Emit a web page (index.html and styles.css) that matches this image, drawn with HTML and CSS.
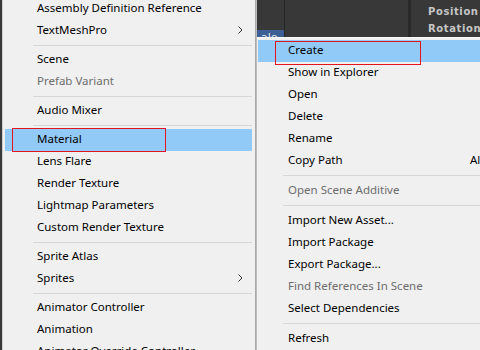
FILE: index.html
```html
<!DOCTYPE html>
<html>
<head>
	<title>Create menu</title>
	<link rel="stylesheet" href="styles.css">
</head>
<body>

<div class="pantalla">
	<div class="menu menu-izq">
		<div class="item">Assembly Definition Reference</div>
		<div class="item sub">TextMeshPro<svg class="flecha" width="5" height="8" viewBox="0 0 5 8"><path d="M0.5 0.5 L4 4 L0.5 7.5" fill="none" stroke="#333" stroke-width="1"/></svg></div>
		<div class="sep"></div>
		<div class="item">Scene</div>
		<div class="item off">Prefab Variant</div>
		<div class="sep"></div>
		<div class="item">Audio Mixer</div>
		<div class="sep"></div>
		<div class="item activo">Material</div>
		<div class="item">Lens Flare</div>
		<div class="item">Render Texture</div>
		<div class="item">Lightmap Parameters</div>
		<div class="item">Custom Render Texture</div>
		<div class="sep"></div>
		<div class="item">Sprite Atlas</div>
		<div class="item sub">Sprites<svg class="flecha" width="5" height="8" viewBox="0 0 5 8"><path d="M0.5 0.5 L4 4 L0.5 7.5" fill="none" stroke="#333" stroke-width="1"/></svg></div>
		<div class="sep"></div>
		<div class="item">Animator Controller</div>
		<div class="item">Animation</div>
		<div class="item">Animator Override Controller</div>
	</div>

	<div class="lado">
		<div class="inspector">
			<div class="pestana"><span>ale</span></div>
			<div class="panel"></div>
			<div class="campos">
				<div>Position</div>
				<div>Rotation</div>
			</div>
		</div>
		<div class="menu menu-der">
			<div class="item activo">Create</div>
			<div class="item">Show in Explorer</div>
			<div class="item">Open</div>
			<div class="item">Delete</div>
			<div class="item">Rename</div>
			<div class="item atajo"><span>Copy Path</span><span>Alt+Ctrl+C</span></div>
			<div class="sep"></div>
			<div class="item off">Open Scene Additive</div>
			<div class="sep"></div>
			<div class="item">Import New Asset...</div>
			<div class="item">Import Package</div>
			<div class="item">Export Package...</div>
			<div class="item off">Find References In Scene</div>
			<div class="item">Select Dependencies</div>
			<div class="sep"></div>
			<div class="item">Refresh</div>
		</div>
	</div>

	<!-- recuadros rojos de la captura -->
	<div class="marca marca-izq"></div>
	<div class="marca marca-der"></div>
</div>

</body>
</html>
```

FILE: styles.css
```css
html, body {
	margin: 0;
	padding: 0;
}

body {
	background-color: #383838;
	font-family: "Noto Sans", "Liberation Sans", sans-serif;
	font-size: 11.5px;
	color: #000;
}

div.pantalla {
	position: relative;
	width: 480px;
	height: 350px;
	overflow: hidden;
	display: flex;
	padding-left: 2px;
	box-sizing: border-box;
}

div.menu {
	background-color: #f0f0f0;
}

div.menu div.item {
	height: 22px;
	line-height: 20px;
	padding-bottom: 2px;
	box-sizing: border-box;
	white-space: nowrap;
	display: flex;
	align-items: center;
}

div.menu div.item.off {
	color: #6d6d6d;
}

div.menu div.item.activo {
	background-color: #91c9f7;
}

div.menu div.sep {
	height: 1px;
	background-color: #d7d7d7;
}

/* menu de la izquierda */
div.menu-izq {
	width: 254px;
	flex: none;
	margin-top: -2px;
	border-left: 1px solid #cfcfcf;
	border-right: 1px solid #a8a8a8;
	padding: 0 3px 0 2px;
	box-sizing: border-box;
	box-shadow: 1px 0 1px #bdbdbd;
}

div.menu-izq div.item {
	padding-left: 32px;
	padding-right: 9px;
}

div.menu-izq div.item.sub {
	justify-content: space-between;
}

div.menu-izq div.sep {
	margin: 3px 0 3px 28px;
}

/* lado derecho */
div.lado {
	flex: 1;
	display: flex;
	flex-direction: column;
	padding-left: 1px;
}

div.inspector {
	height: 37px;
	flex: none;
	display: flex;
	background-color: #383838;
}

div.pestana {
	width: 27px;
	display: flex;
	align-items: flex-end;
	border-right: 1px solid #262626;
}

div.pestana span {
	display: block;
	width: 100%;
	height: 7px;
	overflow: hidden;
	background-color: #3e5f96;
	color: #e6e6e6;
	font-family: "DejaVu Sans", sans-serif;
	font-size: 11px;
	line-height: 16px;
	text-indent: 4px;
}

div.panel {
	width: 123px;
	border-right: 3px solid #2a2a2a;
}

div.campos {
	flex: 1;
	padding: 3px 0 0 17px;
	font-family: "DejaVu Sans", sans-serif;
	font-weight: bold;
	font-size: 10px;
	letter-spacing: 0.6px;
	line-height: 17px;
	color: #c6c6c6;
	white-space: nowrap;
}

/* menu de la derecha */
div.menu-der {
	flex: 1;
	border-top: 1px solid #f8f8f8;
	padding-top: 2px;
	padding-left: 1px;
}

div.menu-der div.item {
	padding-left: 30px;
}

div.menu-der div.item.atajo span:first-child {
	width: 182px;
	flex: none;
}

div.menu-der div.sep {
	margin: 3px 0 4px 25px;
}

/* recuadros rojos */
div.marca {
	position: absolute;
	border: 1px solid #e3141b;
}

div.marca-izq {
	left: 12px;
	top: 128px;
	width: 152px;
	height: 22px;
}

div.marca-der {
	left: 275px;
	top: 41px;
	width: 144px;
	height: 22px;
}
```
